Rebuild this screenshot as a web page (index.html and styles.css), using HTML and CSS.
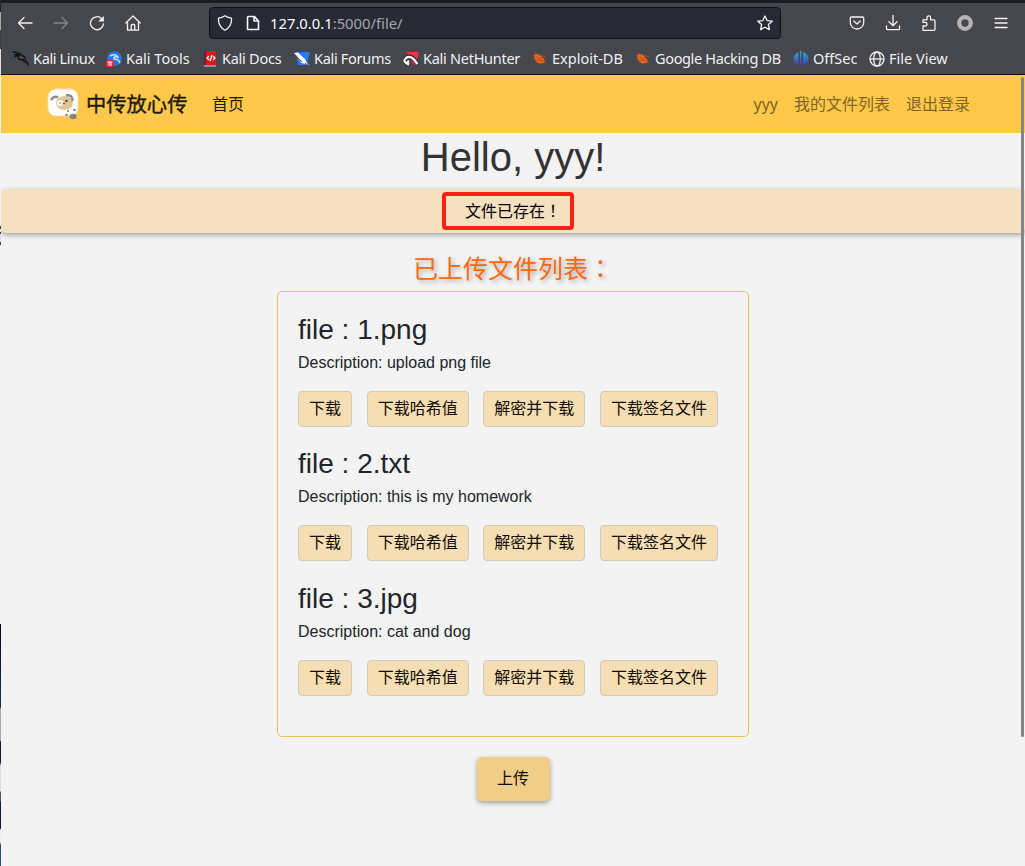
FILE: index.html
```html
<!DOCTYPE html>
<html lang="zh-CN">
<head>
<meta charset="utf-8">
<title>中传放心传</title>
<link rel="stylesheet" href="styles.css">
</head>
<body>
<div class="window">
  <header class="chrome">
    <div class="toolbar">
      <div class="nav-icons">
        <svg class="ic" viewBox="0 0 16 16"><path d="M15 8H1.5M7 2.5 1.5 8 7 13.500"/></svg>
        <svg class="ic dim" viewBox="0 0 16 16"><path d="M1 8h13.500M9 2.500 14.500 8 9 13.500"/></svg>
        <svg class="ic" viewBox="0 0 16 16"><path d="M12.500 3.500A6.500 6.500 0 1 0 14.500 8.800"/><path d="M14.800 1v5.500H9.300z" fill="#f3f3f5" stroke="none"/></svg>
        <svg class="ic" viewBox="0 0 16 16"><path d="M.8 8 8 1l7.200 7M2.500 7v8.200h11V7M6.200 15V10.500q0-1 1-1h1.600q1 0 1 1V15"/></svg>
      </div>
      <div class="urlbar">
        <svg class="ic" viewBox="0 0 16 16"><path d="M8 .8Q11 3 14.500 3.200 15 11.500 8 15.300 1 11.500 1.500 3.200 5 3 8 .8z"/></svg>
        <svg class="ic doc" viewBox="0 0 16 16"><path d="M3.500 1.500h6L13.500 6v8.500h-11v-12q0-1 1-1zM9 1.500V6h4.500" stroke-width="1.600"/></svg>
        <span class="url"><b>127.0.0.1</b>:5000/file/</span>
        <svg class="ic" viewBox="0 0 16 16"><path d="m8 1 2.100 4.600 5.100.6-3.800 3.400 1 5L8 12.200l-4.400 2.400 1-5L.8 6.200l5.100-.6z"/></svg>
      </div>
      <div class="tools">
        <svg class="ic" viewBox="0 0 16 16"><path d="M2.500 2h11q1.200 0 1.200 1.200V7.500a6.700 6.500 0 0 1-13.400 0V3.200Q1.300 2 2.500 2zM4.800 6 8 9l3.200-3"/></svg>
        <svg class="ic" viewBox="0 0 16 16"><path d="M8 .5v10M4 6.800l4 4 4-4M1.500 11v2.500q0 1.200 1.200 1.200h10.600q1.200 0 1.200-1.200V11"/></svg>
        <svg class="ic" viewBox="0 0 16 16"><path d="M2 15.300V11h2.200a1.800 1.800 0 0 0 0-3.600H2V4.800h4V2.600a1.800 1.800 0 0 1 3.600 0v2.200H13q1 0 1 1v8.500q0 1-1 1z"/></svg>
        <svg class="ic" viewBox="0 0 16 16"><circle cx="8" cy="8" r="5.800" stroke="#b3b3b5" stroke-width="4.300"/></svg>
        <svg class="ic" viewBox="0 0 16 16"><path d="M2 3.500h12M2 8h12M2 12.500h12"/></svg>
      </div>
    </div>
    <nav class="bookmarks">
      <a class="bm b1"><svg viewBox="0 0 16 16" fill="none" stroke="#111217" stroke-width="1.400"><path d="M0 .8q3 .2 5 1.700M1 4q3-1 6-.5l4.500 2.500M5 2l3 1.500M1.500 5.800l4-1.500M6 4Q4 7 6.500 8.500q5-.5 7 1.500 1.500 2 2 4.500M9 4l4 3.500M9 9l4 3"/></svg><span>Kali Linux</span></a>
      <a class="bm b2"><svg viewBox="0 0 16 16"><circle cx="8.500" cy="7.500" r="7.300" fill="#2678dc"/><path d="M4 5q6-3 8 1-5-1-4 2 5 0 6 4" stroke="#c9e3ff" stroke-width="1.400" fill="none"/><rect y="9" width="8" height="7" rx="1.500" fill="#e02936"/><path d="M1.500 11h5M3 11v4M5 11v4" stroke="#fff"/></svg><span>Kali Tools</span></a>
      <a class="bm b3"><svg viewBox="0 0 16 16"><path d="M2 1 4 0h10v14H2z" fill="#d81920"/><path d="M2 1 4 0v14H2z" fill="#701b3b"/><path d="M2 15h12" stroke="#ddd"/><path d="m7 5-2 2 2 2M10 4 8 10M11 5l2 2-2 2" stroke="#fff" stroke-width="1.200" fill="none"/></svg><span>Kali Docs</span></a>
      <a class="bm b4"><svg viewBox="0 0 16 16"><path d="M2 1h14l-3 13H4z" fill="#277be8"/><path d="m0 2 4-.5 7 6.500 2 4 3 3-4.500-2-4-1z" fill="#fff"/><path d="m1 3.500 7 7.500M11 12l4 3" stroke="#191f30" stroke-width=".8"/></svg><span>Kali Forums</span></a>
      <a class="bm b5"><svg viewBox="0 0 16 16"><path d="M3 1h13l-3 11z" fill="#ed3440"/><path d="M4.500 13Q-.5 9.500 4 6q4-2 7 2l4 5.500" fill="none" stroke="#35202a" stroke-width="3.500"/><path d="m8 10 5 4" stroke="#c7213a" stroke-width="2"/><path d="M6 13.500Q-1 11 3 7q4-3 8 1.500l3.500 4.500M6 13.500q-3-2 0-3.500" fill="none" stroke="#fff" stroke-width="2.200"/></svg><span>Kali NetHunter</span></a>
      <a class="bm b6"><svg viewBox="0 0 16 16"><path d="M2 4q4-2.500 7 1l4 4.500-1 2.500-5 .5Q2 10 2 4z" fill="#ef681c"/><path d="m0 8 13 2M3 1l5 7M1 4l13 8M4 12l5-5M9 13l1-8M9 4l5 2" stroke="#b95120" stroke-width=".7"/></svg><span>Exploit-DB</span></a>
      <a class="bm b7"><svg viewBox="0 0 16 16"><path d="M2 4q4-2.500 7 1l4 4.500-1 2.500-5 .5Q2 10 2 4z" fill="#ef681c"/><path d="m0 8 13 2M3 1l5 7M1 4l13 8M4 12l5-5M9 13l1-8M9 4l5 2" stroke="#b95120" stroke-width=".7"/></svg><span>Google Hacking DB</span></a>
      <a class="bm b8"><svg viewBox="0 0 16 16"><defs><linearGradient id="off" x2="0" y2="1"><stop stop-color="#28aec3"/><stop offset="1" stop-color="#492dbb"/></linearGradient></defs><path d="M5.500 1v13Q.5 12 .5 7.500T5.500 1zM7 0h1.500v16L7 14zM10 1q5.500 2 5.500 6.500T10 14z" fill="url(#off)"/></svg><span>OffSec</span></a>
      <a class="bm b9"><svg viewBox="0 0 16 16" fill="none" stroke="#eeeef0" stroke-width="1.300"><circle cx="8" cy="8" r="7"/><ellipse cx="8" cy="8" rx="3.300" ry="7"/><path d="M1 8h14"/></svg><span>File View</span></a>
    </nav>
  </header>
  <main class="page">
    <nav class="navbar">
      <svg class="logo" viewBox="0 0 32 32"><rect x="1" y="1" width="30" height="27" rx="8" fill="#fff" stroke="#f1dfb6"/><ellipse cx="17.500" cy="15" rx="8.500" ry="7" fill="#e0c798"/><path d="M4 12q3-5 7-2.500M19 7.500q7-1 6.500 5.500" fill="none" stroke="#8a8b8d" stroke-width="2.500"/><circle cx="13" cy="15" r="3" fill="#fff"/><circle cx="13" cy="15" r="1.200" fill="#c9bda0"/><circle cx="19.500" cy="13" r="1.200" fill="#444"/><ellipse cx="17" cy="15.500" rx="1.200" ry=".8" fill="#695b4a"/><ellipse cx="26" cy="28.500" rx="3.600" ry="2.700" fill="#85837e"/><circle cx="19.500" cy="27" r="1.200" fill="#777"/><circle cx="21" cy="23" r=".9" fill="#777"/><circle cx="27.500" cy="22" r="1.200" fill="#777"/></svg>
      <span class="brand">中传放心传</span>
      <a class="home">首页</a>
      <div class="account"><a>yyy</a><a>我的文件列表</a><a>退出登录</a></div>
    </nav>
    <h1>Hello, yyy!</h1>
    <div class="flash"><span class="mark">文件已存在<span class="punct" lang="zh-TW">！</span></span></div>
    <h2>已上传文件列表<span class="punct" lang="zh-TW">：</span></h2>
    <section class="card">
      <article><h3>file : 1.png</h3><p>Description: upload png file</p><div class="actions"><button>下载</button><button>下载哈希值</button><button>解密并下载</button><button>下载签名文件</button></div></article>
      <article><h3>file : 2.txt</h3><p>Description: this is my homework</p><div class="actions"><button>下载</button><button>下载哈希值</button><button>解密并下载</button><button>下载签名文件</button></div></article>
      <article><h3>file : 3.jpg</h3><p>Description: cat and dog</p><div class="actions"><button>下载</button><button>下载哈希值</button><button>解密并下载</button><button>下载签名文件</button></div></article>
    </section>
    <button class="upload">上传</button>
  </main>
  <div class="scrollbar"></div>
  <div class="edge"></div>
</div>
</body>
</html>
```
FILE: styles.css
```css
* { box-sizing: border-box; }
body { margin: 0; background: #f3f3f3; font-family: "Liberation Sans", "Noto Sans CJK SC", sans-serif; font-size: 16px; line-height: 1.5; color: #212529; }
.window { position: relative; width: 1025px; height: 866px; overflow: hidden; padding-left: 1px; }
.chrome { height: 75px; background: #45474d; border-top: 3px solid #1b1c22; border-bottom: 1px solid #101116; font-family: "Noto Sans", sans-serif; }
.toolbar { height: 40px; display: flex; align-items: center; padding: 0 16px; }
.ic { width: 16px; height: 16px; flex: none; fill: none; stroke: #f3f3f5; stroke-width: 1.3; stroke-linecap: round; stroke-linejoin: round; }
.dim { stroke: #85868b; }
.nav-icons { display: flex; gap: 20px; width: 192px; }
.urlbar { width: 572px; height: 32px; display: flex; align-items: center; padding: 0 7px; background: #272935; border: 1px solid #101219; border-radius: 4px; }
.doc { margin-left: 12px; }
.url { flex: 1; margin-left: 9px; font-size: 14.800px; color: #a5a6ac; }
.url b { font-weight: 400; color: #fbfbfe; }
.tools { display: flex; gap: 20px; margin-left: 68px; }
.bookmarks { display: flex; height: 31px; align-items: center; padding-left: 12px; color: #f1f1f3; font-size: 14.500px; white-space: nowrap; }
.bm { display: flex; align-items: center; gap: 4px; flex: none; }
.bm svg { width: 16px; height: 16px; flex: none; }
.b1 { width: 93px; letter-spacing: -.35px; }
.b2 { width: 96px; }
.b3 { width: 92px; letter-spacing: -.25px; }
.b4 { width: 109px; letter-spacing: -.3px; }
.b5 { width: 129px; letter-spacing: -.27px; }
.b6 { width: 103px; }
.b7 { width: 158px; letter-spacing: -.35px; }
.b8 { width: 76px; }
.page { display: flex; flex-direction: column; align-items: center; }
.navbar { width: 100%; height: 58px; background: #ffc84a; display: flex; align-items: center; padding: 0 55px 0 46px; font-family: "Noto Sans", "Noto Sans CJK SC", sans-serif; color: #1d1a12; }
.logo { width: 32px; height: 32px; }
.brand { width: 101px; margin-left: 7px; padding-bottom: 2px; font-family: "Noto Sans CJK SC", sans-serif; font-size: 20.300px; line-height: 30px; font-weight: 400; -webkit-text-stroke: .4px; white-space: nowrap; }
.home { margin-left: 25px; }
.account { margin-left: auto; display: flex; gap: 16px; color: #806525; }
h1, h2, h3, p { margin: 0; font-weight: 400; }
h1 { font-size: 40px; line-height: 48px; color: #333; }
.flash { width: 100%; height: 44px; margin-top: 8px; background: #f5e1c0; border-radius: 5px; box-shadow: 0 2px 5px rgba(0,0,0,.35); display: flex; justify-content: center; align-items: center; }
.mark { width: 132px; height: 38px; margin-right: 10px; border: 4px solid #fb2015; border-radius: 4px; padding-left: 19px; line-height: 29px; color: #000; white-space: nowrap; }
.punct { font-family: "Noto Sans CJK TC", sans-serif; }
h2 { margin-top: 16px; height: 38px; font-size: 25px; line-height: 36px; color: #f96b10; text-shadow: 2px 2px 4px rgba(0,0,0,.3); }
.card { width: 472px; height: 446px; margin-top: 4px; padding: 20px; border: 1px solid #e9bd5b; border-radius: 5px; }
article { height: 134.400px; }
h3 { font-size: 28px; line-height: 36px; }
p { margin-top: 3px; line-height: 24px; }
.actions { display: flex; gap: 14.670px; margin-top: 16px; }
button { height: 36px; padding: 0 10px 4px; border: 1px solid #d2cbbd; border-radius: 4px; background: #f5deb3; color: #120b00; font: 16px/30px "Noto Sans CJK SC", sans-serif; white-space: nowrap; }
.upload { width: 73px; height: 44px; margin-top: 20px; border: 0; border-radius: 5px; background: #f0ce88; box-shadow: 0 2px 5px rgba(0,0,0,.35); }
.scrollbar { position: absolute; right: 1px; top: 77px; width: 3px; height: 660px; border-radius: 2px; background: #858585; }
.edge { position: absolute; left: 0; top: 0; width: 1px; height: 866px; background: linear-gradient(#20242c 0 12px, #aaa 12px 30px, #3a414c 30px 49px, #ddd 49px 75px, #f2f2f2 75px 226px, #444 226px 229px, #eee 229px 232px, #444 232px 234px, #ddd 234px 242px, #444 242px 245px, #f2f2f2 245px 624px, #050a13 624px, #19304f 707px, #aaa 709px 740px, #161b29 742px 762px, #ddd 766px 791px, #555 792px 801px, #101c30 802px 828px, #eee 830px 842px, #294b70 845px); }
```
